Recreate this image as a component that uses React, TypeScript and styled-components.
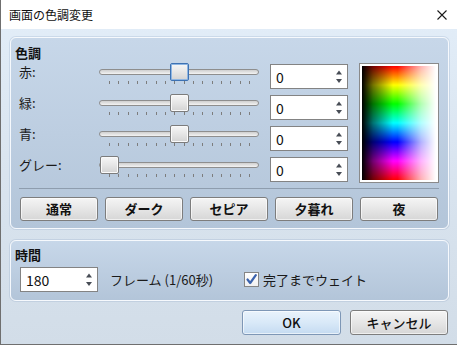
import React from "react";
import styled, { createGlobalStyle } from "styled-components";

const FONT = `"Noto Sans CJK JP", "Noto Sans", sans-serif`;

const GlobalStyle = createGlobalStyle`
  html, body { margin: 0; padding: 0; background: #ffffff; }
  body { font-family: ${FONT}; color: #1a1a1a; }
  * { box-sizing: border-box; }
`;

const Window = styled.div`
  width: 457px;
  height: 345px;
  display: flex;
  flex-direction: column;
  border-left: 1px solid #6f6f6f;
  border-bottom: 1px solid #6f6f6f;
  background: linear-gradient(to bottom, #e3eef9 0%, #d9e4ef 50%, #d2dde8 100%);
  overflow: hidden;
`;

const TitleBar = styled.div`
  height: 29px;
  flex: none;
  background: #ffffff;
  display: flex;
  align-items: center;
  justify-content: space-between;
  padding: 0 10px 0 8px;
`;

const Title = styled.span`
  font-size: 12px;
  line-height: 14px;
  color: #111;
`;

const Body = styled.div`
  flex: 1;
  display: flex;
  flex-direction: column;
  padding: 8px 8px 0 9px;
`;

const Group = styled.section<{ $pad: string; $mt?: number }>`
  border: 1px solid #f6f9fd;
  border-radius: 6px;
  background: linear-gradient(to bottom, #c7d7e9, #b3c5d9);
  box-shadow: 0 0 0 1px rgba(140, 165, 195, 0.25);
  padding: ${(p) => p.$pad};
  margin-top: ${(p) => p.$mt ?? 0}px;
`;

const Heading = styled.div`
  font-size: 13px;
  line-height: 17px;
  font-weight: 700;
  color: #111;
  margin-left: -4px;
`;

const ToneGrid = styled.div`
  margin-top: 2px;
  display: grid;
  grid-template-columns: 69px 160px 78px 80px;
  grid-template-rows: repeat(4, 31px);
  column-gap: 11px;
`;

const RowLabel = styled.div`
  font-size: 13px;
  line-height: 18px;
  color: #1a1a1a;
  align-self: start;
`;

const SliderBox = styled.div`
  position: relative;
  height: 31px;
`;

const Track = styled.div`
  position: absolute;
  left: 0;
  right: 0;
  top: 6px;
  height: 6px;
  border: 1px solid #8e8e8e;
  border-radius: 3px;
  background: linear-gradient(to bottom, #cfcfcf, #f3f3f3);
`;

const Thumb = styled.div<{ $focused?: boolean }>`
  position: absolute;
  top: 0;
  width: 19px;
  height: 18px;
  border-radius: 2px;
  border: 1px solid ${(p) => (p.$focused ? "#3d72b3" : "#7c7c7c")};
  box-shadow: ${(p) => (p.$focused ? "inset 0 0 0 1px #8fb6e2" : "inset 0 0 0 1px #fafafa")};
  background: linear-gradient(to bottom, #f7f7f7 0%, #e6e6e6 50%, #d3d3d3 100%);
`;

const TickRow = styled.div`
  position: absolute;
  left: 10px;
  width: 141px;
  top: 18px;
  height: 3px;
  display: flex;
  justify-content: space-between;
`;

const Tick = styled.span`
  width: 1px;
  height: 3px;
  background: #7d7d7d;
`;

const SpinBox = styled.div<{ $mt?: number }>`
  width: 78px;
  height: 25px;
  margin-top: ${(p) => p.$mt ?? 0}px;
  border: 1px solid #838383;
  background: #ffffff;
  display: flex;
  align-items: center;
  justify-content: space-between;
  padding: 0 5px 0 5px;
  align-self: start;
  flex: none;
`;

const SpinValue = styled.span`
  font-size: 14px;
  line-height: 16px;
  color: #111;
`;

const Preview = styled.div`
  grid-column: 4;
  grid-row: 1 / span 4;
  align-self: start;
  height: 120px;
  border: 1px solid #8a8a8a;
  background: #ffffff;
  padding: 2px;
`;

const Spectrum = styled.div`
  width: 100%;
  height: 100%;
  background:
    linear-gradient(to right, rgba(0,0,0,1) 0%, rgba(0,0,0,0.55) 15%, rgba(0,0,0,0) 42%, rgba(255,255,255,0) 48%, rgba(255,255,255,0.7) 80%, rgba(255,255,255,1) 100%),
    linear-gradient(to bottom, #ff0000 0%, #ffff00 16.7%, #00ff00 33.3%, #00ffff 50%, #0000ff 66.7%, #ff00ff 83.3%, #ff0000 100%);
`;

const Separator = styled.div`
  margin-top: 1px;
  height: 1px;
  background: #8e9dae;
`;

const PresetRow = styled.div`
  margin: 8px 1px 0 1px;
  display: grid;
  grid-template-columns: repeat(5, 78px);
  column-gap: 7px;
`;

const PushButton = styled.button<{ $primary?: boolean; $bold?: boolean; $w?: number; $h?: number }>`
  width: ${(p) => (p.$w ? `${p.$w}px` : "auto")};
  height: ${(p) => p.$h ?? 24}px;
  padding: 0;
  border: 1px solid ${(p) => (p.$primary ? "#7e97b6" : "#7d7d7d")};
  border-radius: 3px;
  background: ${(p) =>
    p.$primary
      ? "linear-gradient(to bottom, #e9f3fc 0%, #d9e9f8 50%, #c5dbf1 100%)"
      : "linear-gradient(to bottom, #f5f5f5 0%, #e6e6e6 50%, #d6d6d6 100%)"};
  box-shadow: inset 0 0 0 1px rgba(255, 255, 255, 0.6);
  font-family: ${FONT};
  font-size: 13px;
  line-height: 16px;
  font-weight: ${(p) => (p.$bold ? 700 : 500)};
  color: #111;
`;

const TimeRow = styled.div`
  margin-top: 4px;
  display: flex;
  align-items: center;
`;

const FrameLabel = styled.span`
  margin-left: 12px;
  width: 134px;
  font-size: 13px;
  line-height: 16px;
  color: #1a1a1a;
`;

const CheckLabel = styled.label`
  display: flex;
  align-items: center;
  gap: 4px;
  font-size: 13px;
  line-height: 16px;
  color: #1a1a1a;
`;

const CheckBox = styled.span`
  width: 15px;
  height: 15px;
  border: 1px solid #858585;
  background: linear-gradient(to bottom, #ffffff, #f1f1f1);
  display: flex;
  align-items: center;
  justify-content: center;
`;

const Footer = styled.div`
  margin-top: 9px;
  padding-right: 1px;
  display: flex;
  justify-content: flex-end;
  gap: 9px;
`;

const CloseIcon = () => (
  <svg width="10" height="10" viewBox="0 0 10 10">
    <path d="M0.5 0.5 L9.5 9.5 M9.5 0.5 L0.5 9.5" stroke="#1a1a1a" strokeWidth="1.1" fill="none" />
  </svg>
);

const SpinArrows = () => (
  <svg width="6" height="14" viewBox="0 0 6 14">
    <path d="M3 0.5 L6 4.5 L0 4.5 Z" fill="#474c55" />
    <path d="M0 9 L6 9 L3 13 Z" fill="#474c55" />
  </svg>
);

const CheckMark = () => (
  <svg width="11" height="11" viewBox="0 0 11 11">
    <path d="M1.5 5.5 L4.2 9 L9.8 1.2" stroke="#3a62ad" strokeWidth="2.2" fill="none" strokeLinecap="round" strokeLinejoin="round" />
  </svg>
);

type SliderProps = { frac: number; focused?: boolean };

const Slider = ({ frac, focused }: SliderProps) => (
  <SliderBox>
    <Track />
    <TickRow>
      {Array.from({ length: 16 }).map((_, i) => (
        <Tick key={i} />
      ))}
    </TickRow>
    <Thumb $focused={focused} style={{ left: `${1 + Math.round(frac * 139)}px` }} />
  </SliderBox>
);

const Spin = ({ value, mt }: { value: string; mt?: number }) => (
  <SpinBox $mt={mt}>
    <SpinValue>{value}</SpinValue>
    <SpinArrows />
  </SpinBox>
);

const rows = [
  { label: "赤:", frac: 0.5, focused: true },
  { label: "緑:", frac: 0.5 },
  { label: "青:", frac: 0.5 },
  { label: "グレー:", frac: 0 },
];

const presets = ["通常", "ダーク", "セピア", "夕暮れ", "夜"];

export default function App() {
  return (
    <>
      <GlobalStyle />
      <Window>
        <TitleBar>
          <Title>画面の色調変更</Title>
          <CloseIcon />
        </TitleBar>
        <Body>
          <Group $pad="6px 9px 7px 8px">
            <Heading>色調</Heading>
            <ToneGrid>
              {rows.map((r) => (
                <React.Fragment key={r.label}>
                  <RowLabel>{r.label}</RowLabel>
                  <Slider frac={r.frac} focused={r.focused} />
                  <Spin value="0" mt={1} />
                </React.Fragment>
              ))}
              <Preview>
                <Spectrum />
              </Preview>
            </ToneGrid>
            <Separator />
            <PresetRow>
              {presets.map((p) => (
                <PushButton key={p} $bold>
                  {p}
                </PushButton>
              ))}
            </PresetRow>
          </Group>
          <Group $pad="5px 9px 8px 8px" $mt={11}>
            <Heading>時間</Heading>
            <TimeRow>
              <SpinWrap>
                <Spin value="180" />
              </SpinWrap>
              <FrameLabel>フレーム (1/60秒)</FrameLabel>
              <CheckLabel>
                <CheckBox>
                  <CheckMark />
                </CheckBox>
                完了までウェイト
              </CheckLabel>
            </TimeRow>
          </Group>
          <Footer>
            <PushButton $primary $w={99} $h={25}>
              OK
            </PushButton>
            <PushButton $w={98} $h={25}>
              キャンセル
            </PushButton>
          </Footer>
        </Body>
      </Window>
    </>
  );
}

const SpinWrap = styled.div`
  margin-left: 1px;
  display: flex;
`;
